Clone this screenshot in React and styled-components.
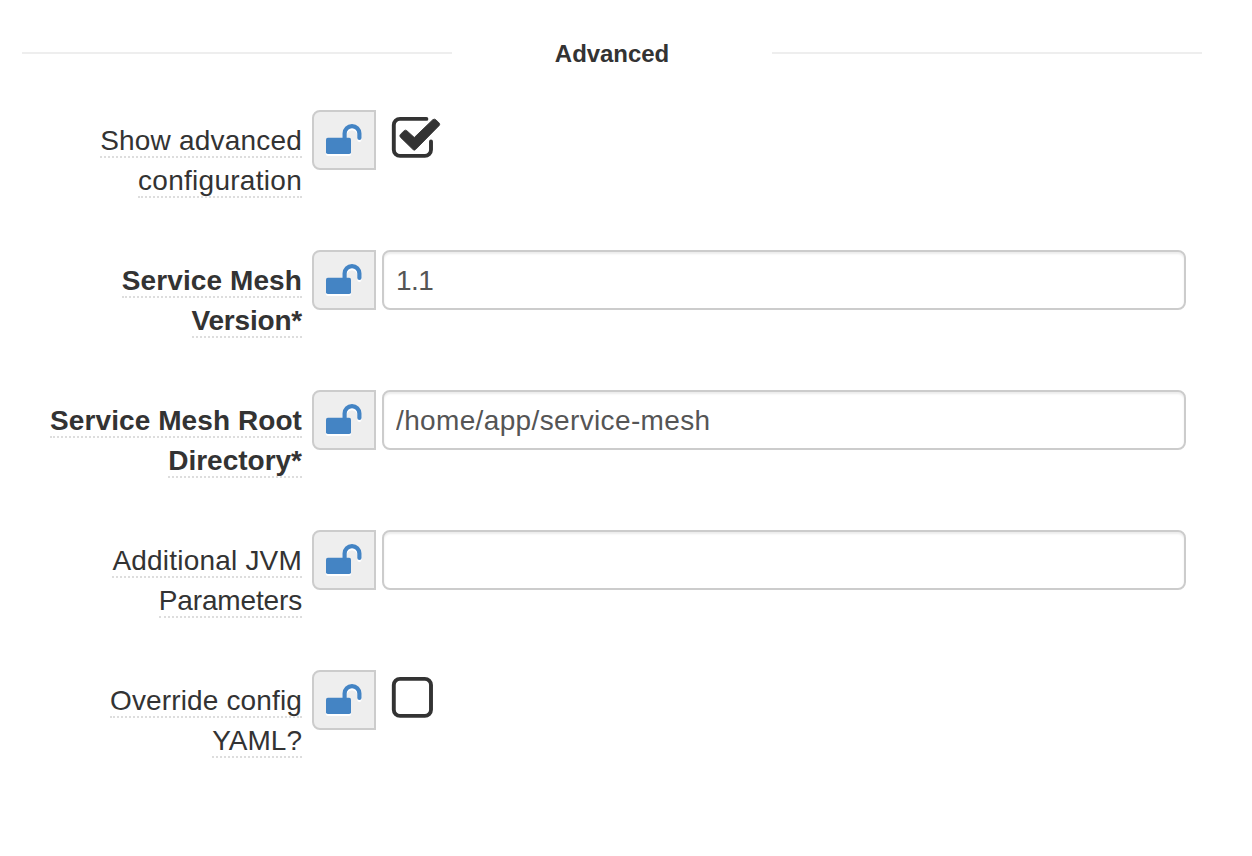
import React from "react";
import styled, { createGlobalStyle } from "styled-components";

const GlobalStyle = createGlobalStyle`
  body {
    margin: 0;
    background: #fff;
    color: #333;
    font-family: "Liberation Sans", Arial, sans-serif;
    font-size: 28px;
    line-height: 40px;
  }
  *, *::before, *::after { box-sizing: border-box; }
`;

const Form = styled.form`
  width: 1252px;
  height: 856px;
  overflow: hidden;
  padding: 32px 50px 0 22px;
`;

const SectionHeader = styled.header`
  display: grid;
  grid-template-columns: 430px 320px 430px;
  align-items: center;
  height: 42px;
`;

const Rule = styled.hr`
  width: 100%;
  height: 2px;
  margin: 0;
  border: 0;
  background: #eee;
`;

const SectionTitle = styled.h2`
  margin: 0;
  font-size: 24px;
  line-height: 40px;
  text-align: center;
  letter-spacing: -0.05px;
  padding-top: 1px;
`;

const Fields = styled.div`
  display: flex;
  flex-direction: column;
  gap: 50px;
  padding-top: 36px;
`;

const Field = styled.div`
  display: flex;
  align-items: flex-start;
  height: 90px;
`;

const Label = styled.label`
  display: flex;
  flex-direction: column;
  align-items: flex-end;
  width: 280px;
  padding-top: 10px;
  margin-right: 10px;
  font-weight: ${(p) => (p.$required ? 700 : 400)};
`;

const LabelLine = styled.span`
  height: 38px;
  margin-bottom: 2px;
  border-bottom: 2px dotted #ddd;
  line-height: 42px;
  white-space: nowrap;
  letter-spacing: ${(p) => p.$spacing}px;
`;

const LockButton = styled.button`
  display: flex;
  align-items: center;
  justify-content: center;
  width: 64px;
  height: 60px;
  padding: 0;
  border: 2px solid #ccc;
  border-radius: 8px 0 0 8px;
  background: #eee;
`;

const Input = styled.input`
  width: 804px;
  height: 60px;
  margin: 0 0 0 6px;
  padding: 2px 12px 0;
  border: 2px solid #ccc;
  border-radius: 8px;
  background: #fff;
  box-shadow: inset 0 2px 2px rgba(0, 0, 0, 0.075);
  color: #555;
  font: inherit;
  letter-spacing: ${(p) => p.$spacing}px;
  outline: 0;
`;

const Toggle = styled.span`
  display: flex;
  margin: 4px 0 0 14px;
`;

const LockIcon = styled.svg`
  display: block;
  filter: drop-shadow(0 2px 0 #fff);
`;

function OpenLock() {
  return (
    <LockIcon width="60" height="56" viewBox="0 0 60 56" aria-hidden="true">
      <rect x="12" y="25.7" width="25" height="16.4" rx="1.8" fill="#4484c4" />
      <path d="M30.6 26.5V21.5a7.4 7.4 0 0 1 14.8 0V25.9" fill="none" stroke="#4484c4" strokeWidth="4.2" strokeLinecap="round" />
    </LockIcon>
  );
}

function CheckIcon({ checked }) {
  return (
    <svg width="52" height="48" viewBox="0 0 52 48" aria-hidden="true">
      {checked ? (
        <>
          <path d="M36.4 4.9H10a6.2 6.2 0 0 0-6.2 6.2v24.6a6.2 6.2 0 0 0 6.2 6.2h24.8a6.2 6.2 0 0 0 6.2-6.2V27.4" fill="none" stroke="#333" strokeWidth="3.9" strokeLinecap="round" />
          <path d="M10.4 20.4 14.2 16.7Q15.5 15.6 16.8 16.7L24.3 23.5 42.8 5.7Q44.5 4.6 45.8 5.7L49.2 9.1Q50.2 10.3 49.2 11.5L25.5 35.6Q24.3 36.7 23.1 35.6L10.4 23.2Q9.2 21.8 10.4 20.4Z" fill="#333" stroke="#333" strokeWidth="0.9" />
        </>
      ) : (
        <rect x="3.8" y="4.9" width="37.2" height="37" rx="6.2" fill="none" stroke="#333" strokeWidth="3.9" />
      )}
    </svg>
  );
}

const fields = [
  { lines: [["Show advanced", 0.2], ["configuration", 0.28]], checked: true },
  { lines: [["Service Mesh", 0.1], ["Version*", -0.2]], required: true, value: "1.1", spacing: -0.6 },
  { lines: [["Service Mesh Root", 0.08], ["Directory*", 0]], required: true, value: "/home/app/service-mesh", spacing: 0.36 },
  { lines: [["Additional JVM", 0.2], ["Parameters", -0.15]], value: "", spacing: 0 },
  { lines: [["Override config", 0.14], ["YAML?", 0]], checked: false },
];

export default function App() {
  return (
    <>
      <GlobalStyle />
      <Form>
        <SectionHeader>
          <Rule />
          <SectionTitle>Advanced</SectionTitle>
          <Rule />
        </SectionHeader>
        <Fields>
          {fields.map((f) => (
            <Field key={f.lines[0][0]}>
              <Label $required={f.required}>
                {f.lines.map(([text, spacing]) => (
                  <LabelLine key={text} $spacing={spacing}>{text}</LabelLine>
                ))}
              </Label>
              <LockButton type="button"><OpenLock /></LockButton>
              {f.value !== undefined ? (
                <Input defaultValue={f.value} $spacing={f.spacing} />
              ) : (
                <Toggle role="checkbox" aria-checked={f.checked}><CheckIcon checked={f.checked} /></Toggle>
              )}
            </Field>
          ))}
        </Fields>
      </Form>
    </>
  );
}
